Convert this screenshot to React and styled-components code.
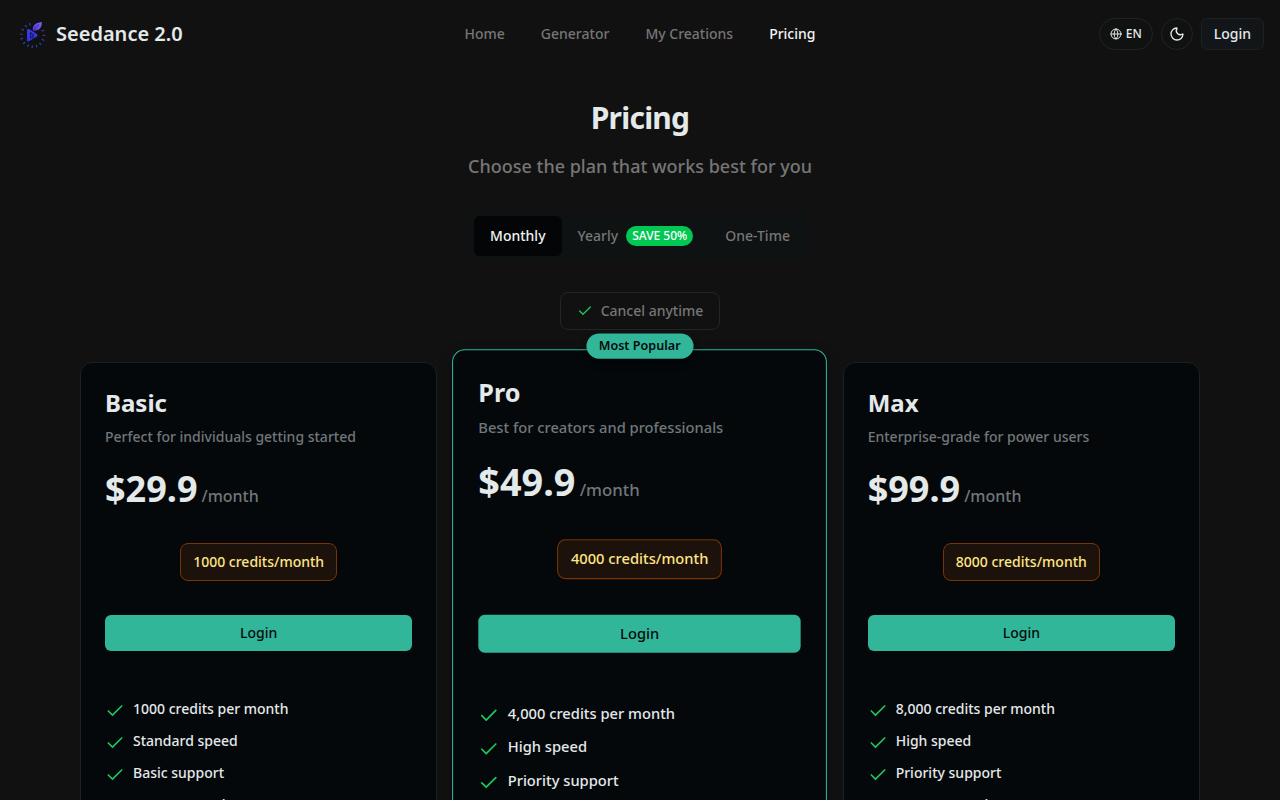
import React, { useState } from 'react';
import styled, { createGlobalStyle, css } from 'styled-components';
import { Check, Globe, Moon } from 'lucide-react';

const GlobalStyle = createGlobalStyle`
  *, *::before, *::after { box-sizing: border-box; }
  body {
    margin: 0;
    background: #111111;
    color: #e4e9ea;
    font-family: "Noto Sans", sans-serif;
    font-size: 14px;
    line-height: 20px;
    font-weight: 500;
    -webkit-font-smoothing: antialiased;
  }
  button { font: inherit; color: inherit; cursor: pointer; }
  a { color: inherit; text-decoration: none; }
  h1, h2, p, ul { margin: 0; padding: 0; }
`;

const Header = styled.header`
  display: grid;
  grid-template-columns: 1fr auto 1fr;
  align-items: center;
  height: 68px;
  padding: 0 16px;
`;

const Brand = styled.a`
  display: flex;
  align-items: center;
  gap: 8px;
  font-size: 20px;
  line-height: 28px;
  font-weight: 600;
`;

const Nav = styled.nav`
  display: flex;
  gap: 4px;
`;

const NavLink = styled.a`
  padding: 8px 16px;
  color: ${({ $active }) => ($active ? '#f5f5f5' : '#767676')};
`;

const Actions = styled.div`
  display: flex;
  justify-content: flex-end;
  gap: 8px;
`;

const RoundButton = styled.button`
  display: flex;
  align-items: center;
  justify-content: center;
  gap: 4px;
  height: 32px;
  min-width: 32px;
  padding: ${({ $text }) => ($text ? '0 10px' : '0')};
  border: 1px solid #202324;
  border-radius: 16px;
  background: #101111;
  font-size: 12px;
`;

const LoginButton = styled.button`
  height: 32px;
  padding: 0 12px;
  border: 1px solid #1d2122;
  border-radius: 6px;
  background: #121618;
`;

const Main = styled.main`
  display: flex;
  flex-direction: column;
  align-items: center;
  max-width: 1184px;
  margin: 0 auto;
  padding: 32px;
`;

const Title = styled.h1`
  font-size: 30px;
  line-height: 36px;
  font-weight: 700;
  letter-spacing: -0.025em;
`;

const Subtitle = styled.p`
  margin-top: 16px;
  font-size: 18px;
  line-height: 28px;
  color: #767676;
`;

const Tabs = styled.div`
  display: flex;
  margin-top: 32px;
  padding: 4px;
  border-radius: 8px;
  background: #0e1213;
`;

const Tab = styled.button`
  display: flex;
  align-items: center;
  gap: 8px;
  height: 40px;
  padding: 0 16px;
  border: 0;
  border-radius: 6px;
  background: ${({ $active }) => ($active ? '#030506' : 'transparent')};
  color: ${({ $active }) => ($active ? '#f0f3f3' : '#767676')};
`;

const SaveBadge = styled.span`
  padding: 2px 6px;
  border-radius: 10px;
  background: #00c853;
  color: #fff;
  font-size: 12px;
  line-height: 16px;
`;

const Note = styled.p`
  display: flex;
  align-items: center;
  gap: 8px;
  margin-top: 32px;
  padding: 8px 16px;
  border: 1px solid #242626;
  border-radius: 8px;
  color: #767676;
`;

const Plans = styled.div`
  display: grid;
  grid-template-columns: repeat(3, 1fr);
  gap: 24px;
  width: 100%;
  margin-top: 32px;
`;

const Card = styled.article`
  position: relative;
  display: flex;
  flex-direction: column;
  padding: 24px 24px 56px;
  border: 1px solid #1c2021;
  border-radius: 12px;
  background: #04080a;
  ${({ $featured }) =>
    $featured &&
    css`
      border-color: #31b69a;
      transform: scale(1.05);
      box-shadow: 0 4px 12px rgba(0, 0, 0, 0.3);
    `}
`;

const PopularBadge = styled.span`
  position: absolute;
  top: -16px;
  left: 50%;
  transform: translateX(-50%);
  padding: 4px 12px;
  border-radius: 12px;
  background: #31b69a;
  color: #050a0b;
  font-size: 12px;
  line-height: 16px;
  font-weight: 600;
  white-space: nowrap;
  box-shadow: 0 4px 8px rgba(0, 0, 0, 0.4);
`;

const PlanName = styled.h2`
  font-size: 24px;
  line-height: 32px;
  font-weight: 700;
`;

const Description = styled.p`
  margin-top: 8px;
  color: #71777a;
`;

const Price = styled.p`
  display: flex;
  align-items: baseline;
  gap: 4px;
  margin-top: 22px;
  font-size: 36px;
  line-height: 40px;
  font-weight: 700;
`;

const Period = styled.span`
  color: #71777a;
  font-size: 16px;
  line-height: 24px;
  font-weight: 500;
`;

const Credits = styled.p`
  align-self: center;
  margin-top: 34px;
  padding: 8px 12px;
  border: 1px solid #7b3306;
  border-radius: 8px;
  background: #1d120b;
  color: #fee685;
`;

const PlanButton = styled.button`
  height: 36px;
  margin-top: 34px;
  border: 0;
  border-radius: 6px;
  background: #31b69a;
  color: #050a0b;
`;

const Features = styled.ul`
  display: flex;
  flex-direction: column;
  gap: 10px;
  margin-top: 48px;
  list-style: none;
`;

const Feature = styled.li`
  display: flex;
  gap: 8px;
  color: #e4e9ea;

  svg { flex: none; margin-top: 2px; }
`;

const RAYS = [66, 90, 114, 138, 160, 182, 204, 228, 252, 276, 300, 324, 346];

function Logo() {
  return (
    <svg width="32" height="32" viewBox="0 0 32 32" fill="none" aria-hidden="true">
      <defs>
        <linearGradient id="leaf" x1="17" y1="13" x2="26" y2="4" gradientUnits="userSpaceOnUse">
          <stop stopColor="#4a3ae6" />
          <stop offset="1" stopColor="#8560ea" />
        </linearGradient>
        <linearGradient id="play" x1="20" y1="12" x2="12" y2="23" gradientUnits="userSpaceOnUse">
          <stop stopColor="#4a38ea" />
          <stop offset="1" stopColor="#2636ea" />
        </linearGradient>
      </defs>
      {RAYS.map((angle) => (
        <path
          key={angle}
          d="M16.6 6.800v-1.800"
          transform={`rotate(${angle} 16.6 17.3)`}
          stroke={angle > 120 && angle < 240 ? '#2c4bb4' : '#453bb0'}
          strokeWidth="1.1"
          strokeLinecap="round"
        />
      ))}
      <path d="M17.200 13c-1.600-5 2-8.300 8.600-9 .3 5-2 8.300-6.200 8.600z" fill="url(#leaf)" />
      <path d="M17.500 13.500c1-3 2.800-5 5.500-7" stroke="#241c78" strokeWidth=".7" />
      <path d="M11 12.500c0-1.300 1-1.900 2.200-1.200l7.600 4.700c1 .7 1 1.700 0 2.400l-7.400 4.700c-1.400.8-2.400.2-2.400-1.200z" fill="url(#play)" />
      <path d="M14.500 14v6.500l2.500-3zM16 22c1.500-2 1.500-4 1-6.500" stroke="#15144e" strokeWidth=".9" />
    </svg>
  );
}

const NAV = ['Home', 'Generator', 'My Creations', 'Pricing'];

const PLANS = [
  {
    name: 'Basic',
    description: 'Perfect for individuals getting started',
    price: '$29.9',
    credits: '1000 credits/month',
    features: ['1000 credits per month', 'Standard speed', 'Basic support', 'No watermark'],
  },
  {
    name: 'Pro',
    description: 'Best for creators and professionals',
    price: '$49.9',
    credits: '4000 credits/month',
    features: ['4,000 credits per month', 'High speed', 'Priority support', 'No watermark'],
    featured: true,
  },
  {
    name: 'Max',
    description: 'Enterprise-grade for power users',
    price: '$99.9',
    credits: '8000 credits/month',
    features: ['8,000 credits per month', 'High speed', 'Priority support', 'No watermark'],
  },
];

function PlanCard({ plan }) {
  return (
    <Card $featured={plan.featured}>
      {plan.featured && <PopularBadge>Most Popular</PopularBadge>}
      <PlanName>{plan.name}</PlanName>
      <Description>{plan.description}</Description>
      <Price>
        {plan.price}
        <Period>/month</Period>
      </Price>
      <Credits>{plan.credits}</Credits>
      <PlanButton type="button">Login</PlanButton>
      <Features>
        {plan.features.map((f) => (
          <Feature key={f}>
            <Check size={20} color="#1fc45c" strokeWidth={2} aria-hidden="true" />
            {f}
          </Feature>
        ))}
      </Features>
    </Card>
  );
}

export default function App() {
  const [billing, setBilling] = useState('Monthly');
  return (
    <>
      <GlobalStyle />
      <Header>
        <Brand href="#">
          <Logo />
          Seedance 2.0
        </Brand>
        <Nav>
          {NAV.map((n) => (
            <NavLink key={n} href="#" $active={n === 'Pricing'}>{n}</NavLink>
          ))}
        </Nav>
        <Actions>
          <RoundButton type="button" $text>
            <Globe size={12} aria-hidden="true" />
            EN
          </RoundButton>
          <RoundButton type="button" aria-label="Toggle theme">
            <Moon size={16} aria-hidden="true" />
          </RoundButton>
          <LoginButton type="button">Login</LoginButton>
        </Actions>
      </Header>
      <Main>
        <Title>Pricing</Title>
        <Subtitle>Choose the plan that works best for you</Subtitle>
        <Tabs>
          {['Monthly', 'Yearly', 'One-Time'].map((t) => (
            <Tab key={t} type="button" $active={billing === t} onClick={() => setBilling(t)}>
              {t}
              {t === 'Yearly' && <SaveBadge>SAVE 50%</SaveBadge>}
            </Tab>
          ))}
        </Tabs>
        <Note>
          <Check size={16} color="#1fc45c" aria-hidden="true" />
          Cancel anytime
        </Note>
        <Plans>
          {PLANS.map((p) => (
            <PlanCard key={p.name} plan={p} />
          ))}
        </Plans>
      </Main>
    </>
  );
}
